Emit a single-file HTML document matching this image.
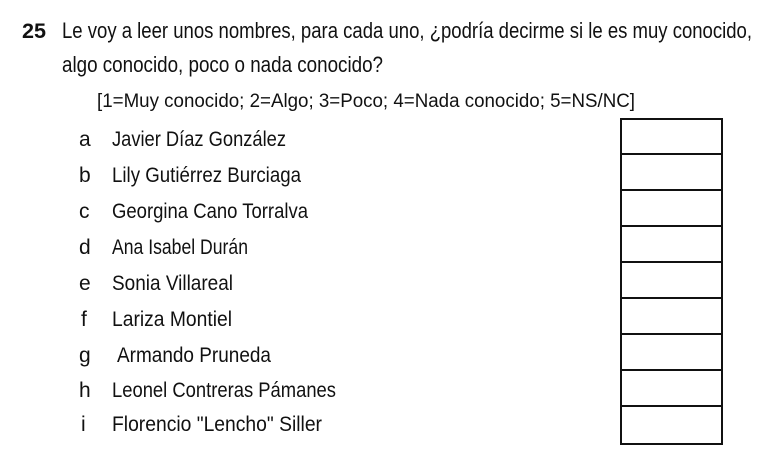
<!DOCTYPE html>
<html><head><meta charset="utf-8"><style>
html,body{margin:0;padding:0;background:#fff;width:768px;height:460px;overflow:hidden}
svg{display:block}
text{font-family:"Liberation Sans",sans-serif;fill:#111}
</style></head><body>
<svg width="768" height="460" viewBox="0 0 768 460" xmlns="http://www.w3.org/2000/svg">
<text x="22" y="38" font-size="21" font-weight="bold" textLength="24" lengthAdjust="spacingAndGlyphs">25</text>
<text x="62" y="38" font-size="22" textLength="690" lengthAdjust="spacingAndGlyphs">Le voy a leer unos nombres, para cada uno, ¿podría decirme si le es muy conocido,</text>
<text x="62" y="72" font-size="22" textLength="321" lengthAdjust="spacingAndGlyphs">algo conocido, poco o nada conocido?</text>
<text x="97" y="107" font-size="19" textLength="538" lengthAdjust="spacingAndGlyphs">[1=Muy conocido; 2=Algo; 3=Poco; 4=Nada conocido; 5=NS/NC]</text>
<g font-size="21">
<text x="79" y="146">a</text><text x="112" y="146" textLength="174" lengthAdjust="spacingAndGlyphs">Javier Díaz González</text>
<text x="79" y="182">b</text><text x="112" y="182" textLength="189" lengthAdjust="spacingAndGlyphs">Lily Gutiérrez Burciaga</text>
<text x="79" y="218">c</text><text x="112" y="218" textLength="196" lengthAdjust="spacingAndGlyphs">Georgina Cano Torralva</text>
<text x="79" y="254">d</text><text x="112" y="254" textLength="136" lengthAdjust="spacingAndGlyphs">Ana Isabel Durán</text>
<text x="79" y="290">e</text><text x="112" y="290" textLength="121" lengthAdjust="spacingAndGlyphs">Sonia Villareal</text>
<text x="81" y="326">f</text><text x="112" y="326" textLength="120" lengthAdjust="spacingAndGlyphs">Lariza Montiel</text>
<text x="79" y="362">g</text><text x="117" y="362" textLength="154" lengthAdjust="spacingAndGlyphs">Armando Pruneda</text>
<text x="79" y="397">h</text><text x="112" y="397" textLength="224" lengthAdjust="spacingAndGlyphs">Leonel Contreras Pámanes</text>
<text x="81" y="431">i</text><text x="112" y="431" textLength="210" lengthAdjust="spacingAndGlyphs">Florencio "Lencho" Siller</text>
</g>
<g stroke="#111" stroke-width="2" fill="none">
<rect x="621" y="119" width="101" height="325"/>
<line x1="621" y1="154" x2="722" y2="154"/>
<line x1="621" y1="190" x2="722" y2="190"/>
<line x1="621" y1="226" x2="722" y2="226"/>
<line x1="621" y1="262" x2="722" y2="262"/>
<line x1="621" y1="298" x2="722" y2="298"/>
<line x1="621" y1="334" x2="722" y2="334"/>
<line x1="621" y1="370" x2="722" y2="370"/>
<line x1="621" y1="406" x2="722" y2="406"/>
</g>
</svg>
</body></html>
